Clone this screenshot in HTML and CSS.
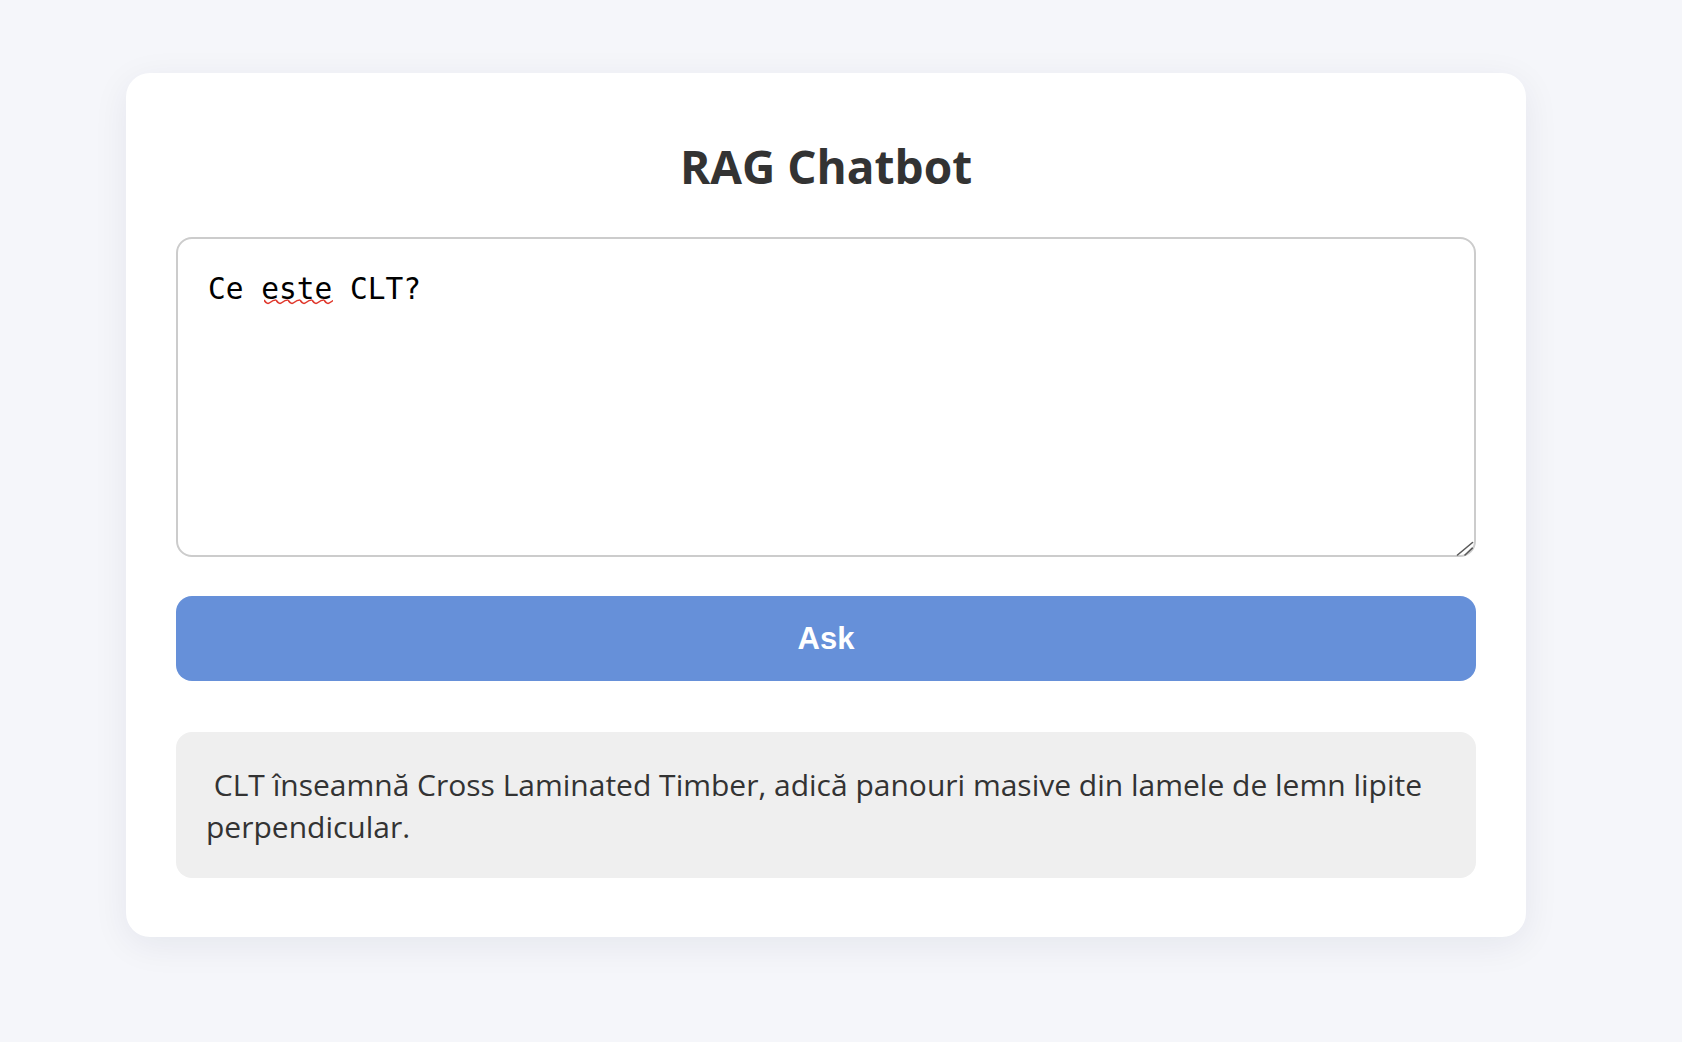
FILE: index.html
```html
<!DOCTYPE html>
<html lang="ro">
<head>
<meta charset="utf-8">
<title>RAG Chatbot</title>
<link rel="stylesheet" href="styles.css">
</head>
<body>
<div class="page">
  <div class="card">
    <h1 class="title">RAG Chatbot</h1>
    <div class="input-wrap">
      <textarea class="question" spellcheck="false">Ce este CLT?</textarea>
      <span class="squiggle"></span>
      <svg class="grip" width="18" height="16" viewBox="0 0 18 16" aria-hidden="true">
        <path d="M1.5 15 L16.5 2.5 M9 15 L16.3 8.2" stroke="#5a5a5a" stroke-width="1.6" fill="none" stroke-linecap="round"/>
      </svg>
    </div>
    <button class="ask">Ask</button>
    <div class="answer"> CLT înseamnă Cross Laminated Timber, adică panouri masive din lamele de lemn lipite perpendicular.</div>
  </div>
</div>
</body>
</html>
```
FILE: styles.css
```css
html, body {
  margin: 0;
  padding: 0;
  background: #f5f6fa;
}
body {
  font-family: "Open Sans", "Noto Sans", sans-serif;
  color: #333;
}
.page {
  padding: 73px 0 60px 126px;
  min-height: 100vh;
  box-sizing: border-box;
}
.card {
  width: 1400px;
  box-sizing: border-box;
  background: #fff;
  border-radius: 24px;
  padding: 50px 50px 59px;
  box-shadow: 0 8px 36px rgba(20, 30, 70, 0.07);
  display: flex;
  flex-direction: column;
}
.title {
  margin: 12px 0 40px;
  text-align: center;
  font-size: 46px;
  font-weight: 700;
  color: #333;
  line-height: 62px;
}
.input-wrap {
  position: relative;
  display: flex;
}
.question {
  width: 100%;
  height: 320px;
  box-sizing: border-box;
  border: 2px solid #cccccc;
  border-radius: 16px;
  padding: 33px 28px 33px 30px;
  font-family: "DejaVu Sans Mono", monospace;
  font-size: 29.5px;
  line-height: 34px;
  color: #000;
  background: #fff;
  outline: none;
  resize: none;
  margin: 0;
}
.squiggle {
  position: absolute;
  left: 88px;
  top: 61px;
  width: 69px;
  height: 8px;
  background-image: url("data:image/svg+xml,%3Csvg xmlns='http://www.w3.org/2000/svg' width='12' height='8'%3E%3Cpath d='M0 2 Q3 7 6 4.5 T12 2' fill='none' stroke='%23e0382c' stroke-width='1.6'/%3E%3C/svg%3E");
  background-repeat: repeat-x;
}
.grip {
  position: absolute;
  right: 2px;
  bottom: 1px;
}
.ask {
  margin-top: 39px;
  height: 85px;
  border: none;
  border-radius: 16px;
  background: #6690d9;
  color: #fff;
  font-family: "Liberation Sans", Arial, sans-serif;
  font-weight: 700;
  font-size: 31px;
  cursor: pointer;
}
.answer {
  margin-top: 51px;
  background: #efefef;
  border-radius: 16px;
  padding: 32px 24px 31px 30px;
  font-size: 30px;
  line-height: 41.5px;
  white-space: pre-wrap;
  color: #333;
}
```
